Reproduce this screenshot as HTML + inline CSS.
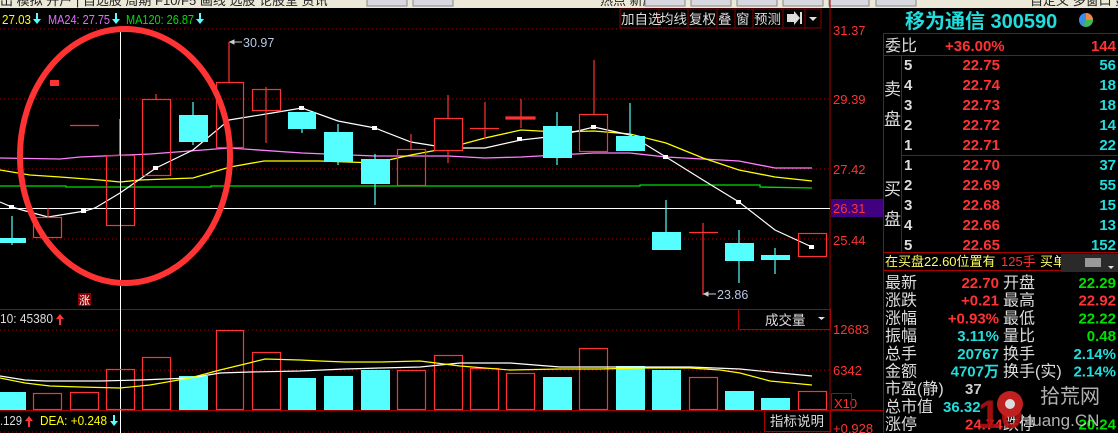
<!DOCTYPE html>
<html><head><meta charset="utf-8"><style>
body{margin:0;background:#000;width:1118px;height:433px;overflow:hidden}
svg{display:block}
text{font-family:"Liberation Sans","Noto Sans CJK SC",sans-serif}
</style></head><body>
<svg width="1118" height="433" viewBox="0 0 1118 433" xmlns="http://www.w3.org/2000/svg">
<rect width="1118" height="433" fill="#000"/>
<rect x="0" y="0" width="1118" height="8" fill="#ece9d8"/>
<g font-size="13" fill="#222">
<text x="0" y="5">出 模拟 开户 | 自选股 周期 F10/F5 画线 选股 论股堂 资讯</text>
<text x="600" y="5">热点 新股</text>
<text x="1030" y="5">自定义 多窗口 数据</text>
</g>
<g fill="#d8d8e0" stroke="#888" stroke-width="1">
<rect x="367" y="-4" width="40" height="10"/><rect x="413" y="-4" width="40" height="10"/>
<rect x="645" y="-4" width="40" height="10"/><rect x="691" y="-4" width="40" height="10"/><rect x="737" y="-4" width="40" height="10"/><rect x="783" y="-4" width="40" height="10"/><rect x="829" y="-4" width="40" height="10"/><rect x="876" y="-4" width="40" height="10"/>
</g>

<g font-size="12.5">
<text x="2" y="24" fill="#ffff00" textLength="29" lengthAdjust="spacingAndGlyphs">27.03</text>
<text x="48" y="24" fill="#e070ff" textLength="62" lengthAdjust="spacingAndGlyphs">MA24: 27.75</text>
<text x="126" y="24" fill="#00e000" textLength="68" lengthAdjust="spacingAndGlyphs">MA120: 26.87</text>
</g>
<g fill="#55ffff">
<path d="M36 13h2v6h3l-4 5-4-5h3z"/><path d="M115 13h2v6h3l-4 5-4-5h3z"/><path d="M199 13h2v6h3l-4 5-4-5h3z"/>
<path d="M113 415h2v6h3l-4 5-4-5h3z"/>
</g>
<g fill="#ff3333">
<path d="M59 325h2v-6h3l-4-5-4 5h3z"/><path d="M28 427h2v-6h3l-4-5-4 5h3z"/>
</g>
<g stroke="#8b0000" fill="#000">
<rect x="620" y="9" width="39" height="19"/><rect x="659" y="9" width="29" height="19"/><rect x="688" y="9" width="29" height="19"/><rect x="717" y="9" width="18" height="19"/><rect x="735" y="9" width="18" height="19"/><rect x="753" y="9" width="30" height="19"/><rect x="783" y="9" width="22" height="19"/><rect x="805" y="9" width="16" height="19"/>
</g>
<g font-size="13.5" fill="#ddd">
<text x="621" y="24">加自选</text><text x="660" y="24">均线</text><text x="689" y="24">复权</text><text x="718" y="24">叠</text><text x="736" y="24">窗</text><text x="754" y="24">预测</text>
</g>
<path d="M787 14h7v-3l6 7-6 7v-3h-7z" fill="#ddd"/><rect x="800" y="12" width="2" height="12" fill="#ddd"/>
<path d="M809 17h8l-4 4z" fill="#ddd"/>

<g stroke="#a00" stroke-dasharray="1,3">
<line x1="0" y1="29" x2="620" y2="29"/><line x1="0" y1="99" x2="830" y2="99"/><line x1="0" y1="169" x2="830" y2="169"/><line x1="0" y1="239" x2="830" y2="239"/>
<line x1="0" y1="330" x2="830" y2="330"/><line x1="0" y1="370" x2="830" y2="370"/><line x1="0" y1="432" x2="830" y2="432"/>
</g>
<line x1="830" y1="0" x2="830" y2="433" stroke="#a00"/>
<line x1="0" y1="309.5" x2="830" y2="309.5" stroke="#a00"/>
<line x1="0" y1="410.5" x2="883" y2="410.5" stroke="#a00"/>
<line x1="0" y1="208.5" x2="830" y2="208.5" stroke="#fff"/>
<rect x="831" y="199" width="52" height="18" fill="#400080"/>
<g font-size="13" fill="#ff3333">
<text x="833" y="35">31.37</text><text x="833" y="104">29.39</text><text x="833" y="174">27.42</text><text x="833" y="213">26.31</text><text x="833" y="245">25.44</text>
<text x="833" y="334">12683</text><text x="833" y="375">6342</text><text x="834" y="408">X10</text>
</g>
<rect x="831.5" y="393.5" width="20" height="16" fill="none" stroke="#a00"/>

<polyline fill="none" stroke="#00e000" stroke-width="1.3" points="0,186 66,186 66,187 211,187 211,186 640,186 640,185 760,185 760,187 812,188"/>
<polyline fill="none" stroke="#ff80ff" stroke-width="1.3" points="0,158 60,159 80,157 150,154 229,148 302,153 375,156 448,156 485,158 521,157 557,155 594,153 630,153 666,157 739,161 775,168 812,168"/>
<polyline fill="none" stroke="#ffff00" stroke-width="1.3" points="0,170 30,175 60,177 100,180 120,182 140,180 193,178 230,167 264,161 320,161 375,163 411,155 448,148 485,138 521,130 557,132 594,131 630,134 666,143 703,158 739,170 775,177 812,181"/>
<polyline fill="none" stroke="#fff" stroke-width="1.2" points="0,202 12,207 22,210 48,217 85,211 95,208 120,193 156,168 193,150 229,120 266,114 302,108 338,121 375,128 411,142 448,148 485,148 521,140 557,136 594,127 630,135 666,157 703,180 739,202 775,230 812,247"/>
<g fill="#fff">
<rect x="9" y="205" width="5" height="4"/><rect x="81" y="209" width="5" height="4"/><rect x="153" y="166" width="5" height="4"/><rect x="299" y="106" width="5" height="4"/><rect x="372" y="126" width="5" height="4"/><rect x="445" y="146" width="5" height="4"/><rect x="517" y="137" width="5" height="4"/><rect x="591" y="125" width="5" height="4"/><rect x="663" y="155" width="5" height="4"/><rect x="736" y="200" width="5" height="4"/><rect x="809" y="245" width="5" height="4"/>
</g>

<g stroke="#ff3333" stroke-width="1.2" fill="none">
<line x1="48" y1="208" x2="48" y2="217"/><rect x="33.5" y="217.5" width="28" height="20"/>
<line x1="70" y1="125.5" x2="99" y2="125.5"/>
<rect x="106.5" y="155.5" width="28" height="70"/>
<line x1="156" y1="94" x2="156" y2="99"/><rect x="142.5" y="99.5" width="28" height="76"/>
<line x1="229" y1="42" x2="229" y2="82"/><rect x="216.5" y="82.5" width="27" height="65"/>
<line x1="266" y1="87" x2="266" y2="143"/><rect x="252.5" y="89.5" width="28" height="21"/>
<rect x="397.5" y="149.5" width="28" height="36"/><line x1="411" y1="134" x2="411" y2="149"/>
<line x1="448" y1="95" x2="448" y2="163"/><rect x="434.5" y="118.5" width="28" height="32" fill="#000"/>
<line x1="485" y1="102" x2="485" y2="139"/><line x1="470" y1="128.5" x2="499" y2="128.5"/>
<line x1="521" y1="99" x2="521" y2="128"/><rect x="506" y="117" width="29" height="2" fill="#ff3333"/>
<line x1="594" y1="60" x2="594" y2="114"/><rect x="579.5" y="114.5" width="28" height="37"/>
<line x1="703" y1="223" x2="703" y2="295"/><line x1="689" y1="232.5" x2="718" y2="232.5"/>
<rect x="798.5" y="233.5" width="28" height="23"/>
</g>
<rect x="50" y="80" width="9" height="6" fill="#ff3333"/>
<g stroke="#55ffff" stroke-width="1.2">
<line x1="12" y1="216" x2="12" y2="245"/><line x1="120" y1="119" x2="120" y2="155"/>
<line x1="193" y1="102" x2="193" y2="145"/><line x1="302" y1="112" x2="302" y2="133"/>
<line x1="338" y1="124" x2="338" y2="165"/><line x1="375" y1="154" x2="375" y2="205"/>
<line x1="557" y1="112" x2="557" y2="165"/><line x1="630" y1="103" x2="630" y2="151"/>
<line x1="666" y1="200" x2="666" y2="250"/><line x1="739" y1="230" x2="739" y2="283"/><line x1="775" y1="248" x2="775" y2="274"/>
</g>
<g fill="#55ffff">
<rect x="0" y="238" width="26" height="5"/><rect x="179" y="115" width="29" height="27"/><rect x="288" y="112" width="28" height="17"/><rect x="324" y="132" width="29" height="30"/><rect x="361" y="159" width="29" height="25"/><rect x="543" y="126" width="29" height="32"/><rect x="616" y="136" width="29" height="15"/><rect x="652" y="232" width="29" height="18"/><rect x="725" y="243" width="29" height="18"/><rect x="761" y="255" width="29" height="5"/>
</g>
<g font-size="12.5" fill="#b8c8e0">
<text x="243" y="47">30.97</text><text x="717" y="299">23.86</text>
</g>
<path d="M230 42h12M230 42l4 -2v4z" stroke="#ccc" fill="#ccc"/>
<path d="M704 294h12M704 294l4 -2v4z" stroke="#ccc" fill="#ccc"/>

<line x1="120.5" y1="28" x2="120.5" y2="433" stroke="#fff"/>
<ellipse cx="125" cy="156" rx="105" ry="127" fill="none" stroke="#ff3333" stroke-width="6"/>
<rect x="78" y="293" width="13" height="13" fill="#8b0000"/><text x="79" y="304" font-size="11" fill="#fff">涨</text>

<g font-size="13"><text x="0" y="323" fill="#ddd" textLength="53" lengthAdjust="spacingAndGlyphs">10: 45380</text></g>
<rect x="738.5" y="309.5" width="92" height="20" fill="none" stroke="#a00"/>
<text x="765" y="325" font-size="13.5" fill="#ddd">成交量</text><path d="M818 317h7l-3.5 3z" fill="#ddd"/>
<g fill="#55ffff">
<rect x="0" y="392" width="26" height="18"/><rect x="179" y="376" width="29" height="34"/><rect x="288" y="378" width="28" height="32"/><rect x="324" y="376" width="29" height="34"/><rect x="361" y="370" width="29" height="40"/><rect x="543" y="377" width="29" height="33"/><rect x="616" y="366" width="29" height="44"/><rect x="652" y="370" width="29" height="40"/><rect x="725" y="391" width="29" height="19"/><rect x="761" y="398" width="29" height="12"/>
</g>
<g fill="none" stroke="#ff3333" stroke-width="1.2">
<rect x="33.5" y="393.5" width="28" height="16"/><rect x="70.5" y="392.5" width="28" height="17"/><rect x="106.5" y="369.5" width="28" height="40"/><rect x="142.5" y="357.5" width="28" height="52"/><rect x="216.5" y="330.5" width="27" height="79"/><rect x="252.5" y="352.5" width="28" height="57"/><rect x="397.5" y="370.5" width="28" height="39"/><rect x="434.5" y="355.5" width="28" height="54"/><rect x="470.5" y="368.5" width="28" height="41"/><rect x="506.5" y="373.5" width="28" height="36"/><rect x="579.5" y="348.5" width="28" height="61"/><rect x="689.5" y="377.5" width="28" height="32"/><rect x="798.5" y="391.5" width="28" height="18"/>
</g>
<polyline fill="none" stroke="#fff" stroke-width="1.2" points="0,376 25,380 45,381 100,381 140,380 190,378 220,373 250,372 300,371 345,369 380,368 420,367 460,363 510,363 560,367 600,367 640,367 690,367 740,369 780,373 812,376"/>
<polyline fill="none" stroke="#ffff00" stroke-width="1.2" points="0,378 25,383 50,386 80,387 120,388 150,385 190,378 220,370 245,364 265,359 300,360 320,361 345,362 380,362 420,361 460,366 510,370 560,369 600,369 640,368 690,368 720,370 740,373 770,381 812,385"/>
<g font-size="13"><text x="0" y="425" fill="#ddd" textLength="22" lengthAdjust="spacingAndGlyphs">.129</text><text x="40" y="425" fill="#ffff00" textLength="67" lengthAdjust="spacingAndGlyphs">DEA: +0.248</text></g>
<rect x="764.5" y="410.5" width="66" height="21" fill="none" stroke="#a00"/>
<text x="770" y="426" font-size="13.5" fill="#ddd">指标说明</text>
<text x="833" y="433" font-size="13" fill="#ff3333">+0.928</text>

<text x="905" y="28" font-size="20" font-weight="bold" fill="#22dddd">移为通信 300590</text>
<circle cx="1086" cy="20" r="7" fill="#3a8ee6"/><path d="M1086 20V13A7 7 0 0 1 1093 20z" fill="#e84"/><path d="M1086 20H1093A7 7 0 0 1 1083 26z" fill="#4b4"/>
<g stroke="#a00" fill="none">
<line x1="883.5" y1="33" x2="883.5" y2="433"/><line x1="883" y1="33.5" x2="1118" y2="33.5"/><line x1="883" y1="55.5" x2="1118" y2="55.5"/><line x1="901.5" y1="55" x2="901.5" y2="252"/><line x1="901" y1="155.5" x2="1118" y2="155.5"/><line x1="883" y1="252.5" x2="1118" y2="252.5"/><line x1="883" y1="270.5" x2="1118" y2="270.5"/>
</g>
<g font-size="15" font-weight="bold">
<text x="885" y="51" fill="#ddd" font-weight="normal" font-size="16">委比</text>
<text x="945" y="51" fill="#ff3333">+36.00%</text><text x="1116" y="51" fill="#ff3333" text-anchor="end">144</text>
<g fill="#ddd"><text x="904" y="70">5</text><text x="904" y="90">4</text><text x="904" y="110">3</text><text x="904" y="130">2</text><text x="904" y="150">1</text><text x="904" y="170">1</text><text x="904" y="190">2</text><text x="904" y="210">3</text><text x="904" y="230">4</text><text x="904" y="250">5</text></g>
<g fill="#ff3333" text-anchor="end"><text x="1000" y="70">22.75</text><text x="1000" y="90">22.74</text><text x="1000" y="110">22.73</text><text x="1000" y="130">22.72</text><text x="1000" y="150">22.71</text><text x="1000" y="170">22.70</text><text x="1000" y="190">22.69</text><text x="1000" y="210">22.68</text><text x="1000" y="230">22.66</text><text x="1000" y="250">22.65</text></g>
<g fill="#22dddd" text-anchor="end"><text x="1116" y="70">56</text><text x="1116" y="90">18</text><text x="1116" y="110">18</text><text x="1116" y="130">14</text><text x="1116" y="150">22</text><text x="1116" y="170">37</text><text x="1116" y="190">55</text><text x="1116" y="210">15</text><text x="1116" y="230">13</text><text x="1116" y="250">152</text></g>
</g>
<g font-size="17" fill="#ddd"><text x="884" y="95">卖</text><text x="884" y="125">盘</text><text x="884" y="195">买</text><text x="884" y="225">盘</text></g>
<g font-size="13"><text x="885" y="266" fill="#ffff66">在买盘22.60位置有</text><text x="1001" y="266" fill="#ff3333">125手</text><text x="1040" y="266" fill="#ffff66">买单</text></g>
<rect x="1061" y="254" width="57" height="18" fill="#2a2a2a"/><rect x="1085" y="258" width="16" height="9" fill="#999"/><path d="M1108 266h6l-3 3z" fill="#ddd"/>
<g font-size="16">
<g fill="#ddd"><text x="885" y="288">最新</text><text x="885" y="305.7">涨跌</text><text x="885" y="323.4">涨幅</text><text x="885" y="341.1">振幅</text><text x="885" y="358.8">总手</text><text x="885" y="376.5">金额</text><text x="885" y="394.2">市盈(静)</text><text x="885" y="411.9">总市值</text><text x="885" y="429.6">涨停</text>
<text x="1003" y="288">开盘</text><text x="1003" y="305.7">最高</text><text x="1003" y="323.4">最低</text><text x="1003" y="341.1">量比</text><text x="1003" y="358.8">换手</text><text x="1003" y="376.5">换手(实)</text><text x="1003" y="429.6">跌停</text></g>
<g font-weight="bold" text-anchor="end" font-size="15">
<text x="999" y="288" fill="#ff3333">22.70</text><text x="999" y="305.7" fill="#ff3333">+0.21</text><text x="999" y="323.4" fill="#ff3333">+0.93%</text><text x="999" y="341.1" fill="#22dddd">3.11%</text><text x="999" y="358.8" fill="#22dddd">20767</text><text x="999" y="376.5" fill="#22dddd">4707万</text>
<text x="1116" y="288" fill="#00e000">22.29</text><text x="1116" y="305.7" fill="#ff3333">22.92</text><text x="1116" y="323.4" fill="#00e000">22.22</text><text x="1116" y="341.1" fill="#00e000">0.48</text><text x="1116" y="358.8" fill="#22dddd">2.14%</text><text x="1116" y="376.5" fill="#22dddd">2.14%</text><text x="1116" y="429.6" fill="#00e000">20.24</text>
</g>
<text x="965" y="394.2" fill="#ccc" font-size="15" font-weight="bold">37</text><text x="943" y="411.9" fill="#22dddd" font-weight="bold" font-size="15">36.32</text><text x="965" y="429.6" fill="#ff3333" font-weight="bold" font-size="15">24.74</text>
</g>
<text x="978" y="428" font-size="40" font-weight="bold" fill="#b01010" opacity="0.9">10</text>
<circle cx="1010" cy="404" r="13" fill="#c02020"/><circle cx="1010" cy="404" r="5" fill="#ddd"/>
<text x="1040" y="403" font-size="20" fill="#d0d0d0" opacity="0.85">拾荒网</text>
<text x="1020" y="426" font-size="17" fill="#d0d0d0" opacity="0.85">Huang.CN</text>
</svg>
</body></html>
